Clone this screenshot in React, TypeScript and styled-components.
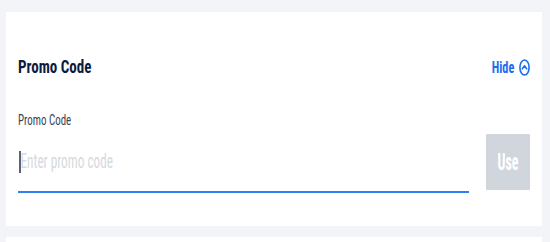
import React, { useState } from 'react'
import styled, { createGlobalStyle } from 'styled-components'

const Global = createGlobalStyle`
  body {
    margin: 0;
    background: #f3f4f8;
    font-family: Roboto, "Liberation Sans", sans-serif;
    font-stretch: 75%;
  }
`

const Page = styled.div`
  display: flex;
  flex-direction: column;
  gap: 11px;
  padding: 12px 8px 0 6px;
`

const Card = styled.section`
  background: #ffffff;
  padding: 43px 12px 33px 12px;
`

const Header = styled.div`
  display: flex;
  align-items: center;
  justify-content: space-between;
  height: 24px;
`

// the UI's type is a tall, very narrow face; squeeze the glyphs to match
const Squeeze = styled.span<{ $x: number; $origin?: string }>`
  display: inline-block;
  white-space: nowrap;
  transform: scaleX(${p => p.$x});
  transform-origin: ${p => p.$origin || 'left'} center;
`

const Title = styled.h2`
  margin: 0;
  font-size: 19px;
  line-height: 24px;
  font-weight: 700;
  color: #0d1b3e;
`

const Toggle = styled.button`
  display: flex;
  align-items: center;
  gap: 5px;
  padding: 0;
  border: none;
  background: none;
  color: #1a6cf0;
  font-family: inherit;
  font-stretch: inherit;
  font-size: 17px;
  font-weight: 700;
  cursor: pointer;
`

const Label = styled.label`
  display: block;
  margin-top: 33px;
  font-size: 14px;
  line-height: 16px;
  color: #3a4256;
`

const InputRow = styled.div`
  display: flex;
  align-items: flex-start;
  gap: 17px;
  margin-top: 6px;
`

const Field = styled.div`
  position: relative;
  flex: 1;
  min-width: 0;
  height: 57px;
  border-bottom: 2px solid #2f7ff7;
  overflow: hidden;
`

const CodeInput = styled.input<{ $x: number }>`
  display: block;
  width: calc(100% / ${p => p.$x});
  height: 57px;
  box-sizing: border-box;
  padding: 0 0 3px 4px;
  border: none;
  outline: none;
  background: transparent;
  font-family: inherit;
  font-stretch: inherit;
  font-size: 21px;
  color: #1f2937;
  caret-color: #4a5468;
  transform: scaleX(${p => p.$x});
  transform-origin: left center;

  &::placeholder {
    color: #d6d9e0;
  }
`

// text caret drawn over the empty field, as it shows in the focused state
const Caret = styled.span`
  position: absolute;
  left: 1px;
  top: 17px;
  width: 2px;
  height: 22px;
  background: #5b6475;
  pointer-events: none;
`

const UseButton = styled.button<{ $active: boolean }>`
  display: flex;
  align-items: center;
  justify-content: center;
  width: 44px;
  height: 56px;
  padding: 0;
  border: none;
  border-radius: 1px;
  background: ${p => (p.$active ? '#1a6cf0' : '#d1d5dc')};
  color: #ffffff;
  font-family: inherit;
  font-stretch: inherit;
  font-size: 24px;
  font-weight: 700;
  cursor: ${p => (p.$active ? 'pointer' : 'default')};
`

const ChevronCircle = () => (
  <svg width="11" height="17" viewBox="0 0 11 17" fill="none">
    <ellipse cx="5.5" cy="8.5" rx="4.6" ry="7.5" stroke="#1a6cf0" strokeWidth="1.6" />
    <path d="M3.3 9.9 L5.5 6.8 L7.7 9.9" stroke="#1a6cf0" strokeWidth="1.6" strokeLinecap="round" strokeLinejoin="round" />
  </svg>
)

export default function App() {
  const [code, setCode] = useState('')

  return (
    <>
      <Global />
      <Page>
        <Card>
          <Header>
            <Title>
              <Squeeze $x={0.79}>Promo Code</Squeeze>
            </Title>
            <Toggle>
              <Squeeze $x={0.72} $origin="right">Hide</Squeeze>
              <ChevronCircle />
            </Toggle>
          </Header>
          <Label htmlFor="promo">
            <Squeeze $x={0.78}>Promo Code</Squeeze>
          </Label>
          <InputRow>
            <Field>
              <CodeInput
                id="promo"
                $x={0.63}
                placeholder="Enter promo code"
                value={code}
                onChange={e => setCode(e.target.value)}
              />
              {code.length === 0 && <Caret />}
            </Field>
            <UseButton $active={code.length > 0}>
              <Squeeze $x={0.58} $origin="center">Use</Squeeze>
            </UseButton>
          </InputRow>
        </Card>
        <Card />
      </Page>
    </>
  )
}
